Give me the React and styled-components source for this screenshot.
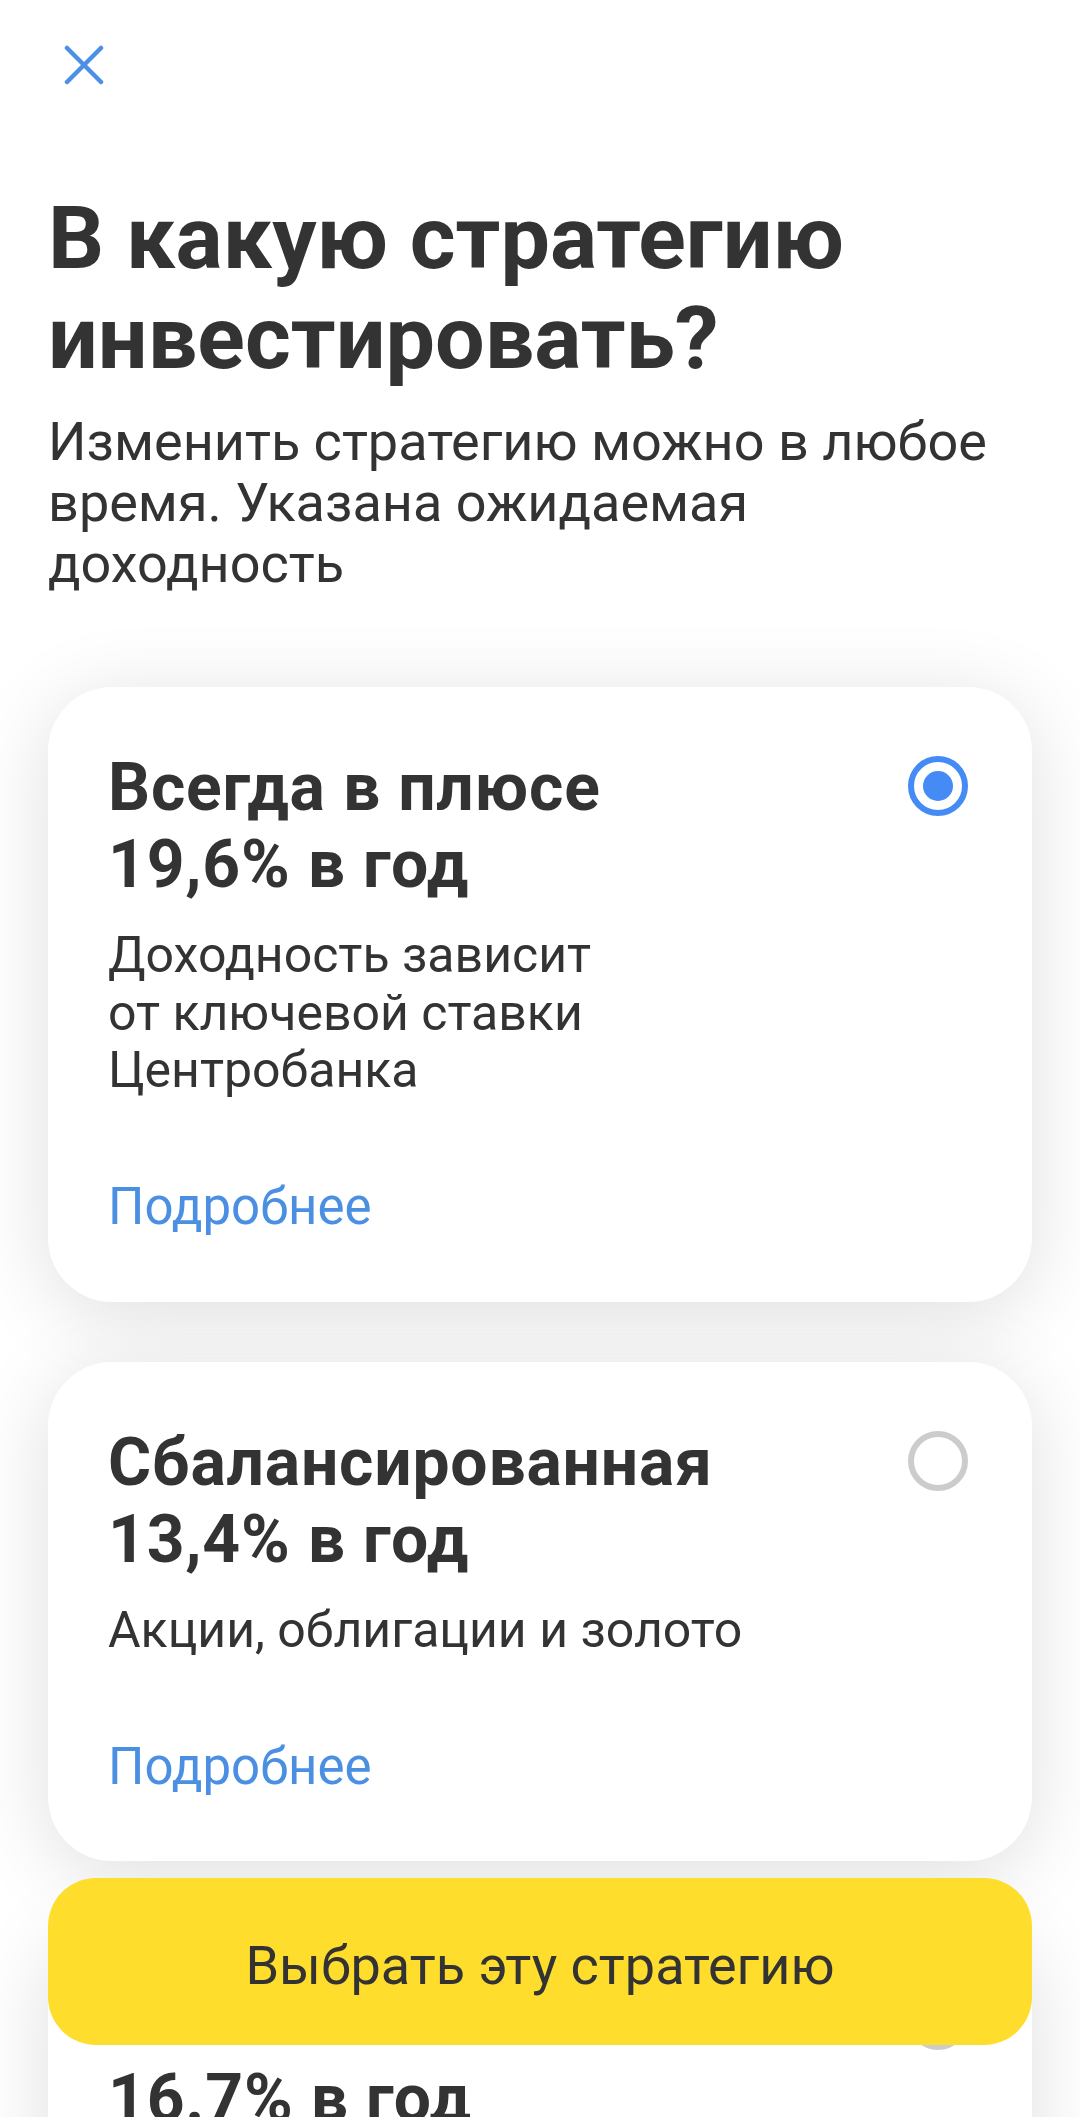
import React from "react";
import styled, { createGlobalStyle } from "styled-components";

const GlobalStyle = createGlobalStyle`
  html, body {
    margin: 0;
    padding: 0;
    background: #ffffff;
  }
  body {
    height: 2124px;
    overflow: hidden;
    font-family: Roboto, "Noto Sans", "Liberation Sans", sans-serif;
    color: #333333;
    -webkit-font-smoothing: antialiased;
  }
  * { box-sizing: border-box; }
`;

const Page = styled.main`
  display: flex;
  flex-direction: column;
  padding: 45px 48px 0;
`;

const CloseButton = styled.button`
  width: 40px;
  height: 40px;
  margin-left: 16px;
  padding: 0;
  border: 0;
  background: transparent;
  display: block;
  cursor: pointer;
`;

const Title = styled.h1`
  margin: 103px 0 0;
  font-size: 88px;
  line-height: 100px;
  font-weight: 700;
  letter-spacing: 0;
  color: #333333;
`;

const Subtitle = styled.p`
  margin: 23px 0 0;
  font-size: 54px;
  line-height: 61px;
  font-weight: 400;
  color: #333333;
`;

const CardList = styled.div`
  display: flex;
  flex-direction: column;
  gap: 60px;
  margin-top: 93px;
`;

const Card = styled.section`
  background: #ffffff;
  border-radius: 64px;
  padding: 62px 64px 66px 60px;
  box-shadow: 0 12px 80px rgba(0, 0, 0, 0.13);
`;

const CardHead = styled.div`
  display: flex;
  align-items: flex-start;
  justify-content: space-between;
  gap: 24px;
`;

const CardTitle = styled.h2`
  margin: 0;
  font-size: 66px;
  line-height: 77px;
  font-weight: 700;
  letter-spacing: 0.8px;
  color: #333333;
`;

const Radio = styled.span`
  flex: none;
  width: 60px;
  height: 60px;
  margin-top: 7px;
  border-radius: 50%;
  border: 6px solid ${(p) => (p.$checked ? "#448bf6" : "#cccccc")};
  display: grid;
  place-items: center;
  &::after {
    content: "";
    width: 30px;
    height: 30px;
    border-radius: 50%;
    background: #448bf6;
    display: ${(p) => (p.$checked ? "block" : "none")};
  }
`;

const Description = styled.p`
  margin: 24px 0 0;
  font-size: 50px;
  line-height: 57.5px;
  font-weight: 400;
  color: #333333;
`;

const MoreLink = styled.a`
  display: block;
  margin-top: 78.5px;
  font-size: 51px;
  line-height: 57.5px;
  font-weight: 400;
  color: #4b8fe2;
  text-decoration: none;
`;

const SubmitButton = styled.button`
  position: fixed;
  left: 48px;
  right: 48px;
  bottom: 79px;
  height: 167px;
  border: 0;
  border-radius: 48px;
  background: #ffdd2d;
  color: #333333;
  font-family: Roboto, "Noto Sans", "Liberation Sans", sans-serif;
  font-size: 54px;
  font-weight: 400;
  padding: 8px 0 0;
  display: flex;
  align-items: center;
  justify-content: center;
`;

const SystemStrip = styled.div`
  position: fixed;
  left: 0;
  right: 0;
  bottom: 0;
  height: 7px;
  background: #ffffff;
`;

const CloseIcon = () => (
  <svg width="40" height="40" viewBox="0 0 40 40" fill="none">
    <path
      d="M3 3 L37 37 M37 3 L3 37"
      stroke="#4b8fe6"
      strokeWidth="4.5"
      strokeLinecap="round"
    />
  </svg>
);

const strategies = [
  {
    name: "Всегда в плюсе",
    rate: "19,6% в год",
    desc: ["Доходность зависит", "от ключевой ставки", "Центробанка"],
    checked: true,
  },
  {
    name: "Сбалансированная",
    rate: "13,4% в год",
    desc: ["Акции, облигации и золото"],
    checked: false,
  },
  {
    name: "Максимальная",
    rate: "16.7% в год",
    desc: ["Акции российских и иностранных", "компаний"],
    checked: false,
  },
];

export default function App() {
  return (
    <>
      <GlobalStyle />
      <Page>
        <CloseButton aria-label="Закрыть">
          <CloseIcon />
        </CloseButton>
        <Title>
          В какую стратегию
          <br />
          инвестировать?
        </Title>
        <Subtitle>
          Изменить стратегию можно в любое время. Указана ожидаемая доходность
        </Subtitle>
        <CardList>
          {strategies.map((s) => (
            <Card key={s.name}>
              <CardHead>
                <CardTitle>
                  {s.name}
                  <br />
                  {s.rate}
                </CardTitle>
                <Radio $checked={s.checked} />
              </CardHead>
              <Description>
                {s.desc.map((line, i) => (
                  <React.Fragment key={i}>
                    {i > 0 && <br />}
                    {line}
                  </React.Fragment>
                ))}
              </Description>
              <MoreLink href="#">Подробнее</MoreLink>
            </Card>
          ))}
        </CardList>
      </Page>
      <SubmitButton>Выбрать эту стратегию</SubmitButton>
      <SystemStrip />
    </>
  );
}
